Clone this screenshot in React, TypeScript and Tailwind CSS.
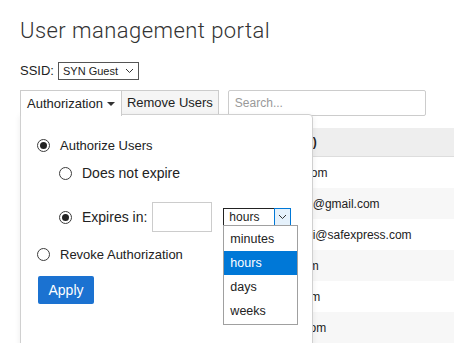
import { useState } from "react";

function Radio({ checked }: { checked?: boolean }) {
    return (
        <span className="w-[13px] h-[13px] rounded-full border border-[#3c3c3c] bg-white flex items-center justify-center shrink-0">
            {checked && <span className="w-[7px] h-[7px] rounded-full bg-[#222]" />}
        </span>
    );
}

function Chevron() {
    return (
        <svg width="9" height="6" viewBox="0 0 9 6" className="shrink-0">
            <polyline points="1,1 4.5,4.5 8,1" fill="none" stroke="#333" strokeWidth="1" />
        </svg>
    );
}

const users = [
    "ajdk@cisco.com",
    "sarah_lee123@gmail.com",
    "vamshir_reddi@safexpress.com",
    "liu@wipro.com",
    "alt@acme.com",
    "tpdr@cisco.com",
];

function App() {
    const [unit, setUnit] = useState("hours");
    const units = ["minutes", "hours", "days", "weeks"];

    return (
        <div className="w-full h-[343px] overflow-hidden bg-white pl-5 pt-[18px] font-['Liberation_Sans',Arial,sans-serif] text-[13px] text-[#222]">
            <h1 className="font-['Roboto',sans-serif] font-light text-[22px] leading-[26px] tracking-[0.45px] text-[#333]">
                User management portal
            </h1>

            <div className="mt-[18px] flex items-center h-[18px]">
                <span className="mr-[4px]">SSID:</span>
                <div className="h-[18px] w-[81px] border border-[#555] flex items-center justify-between pl-[4px] pr-[4px] text-[11px]">
                    <span>SYN Guest</span>
                    <Chevron />
                </div>
            </div>

            <div className="relative mt-[10px] flex items-start h-[25px]">
                <div className="relative z-20 h-[26px] border border-b-0 border-[#ccc] bg-white flex items-center pl-[6px] pr-[6px] gap-[4px]">
                    <span>Authorization</span>
                    <svg width="8" height="4" viewBox="0 0 8 4">
                        <polygon points="0,0 8,0 4,4" fill="#333" />
                    </svg>
                </div>
                <div className="h-[25px] border border-l-0 border-[#ccc] bg-[#f5f5f5] flex items-center px-[5px]">
                    Remove Users
                </div>
                <div className="ml-[9px] h-[26px] w-[198px] border border-[#ccc] rounded-[2px] flex items-center pl-[6px] text-[12px] text-[#999]">
                    Search...
                </div>

                <div className="absolute left-0 top-[24px] z-10 w-[293px] h-[240px] border border-[#d0d0d0] rounded-tr-[4px] bg-white shadow-[0_2px_6px_rgba(0,0,0,0.08)] pl-[16px] pt-[20px]">
                    <div className="h-[21px] flex items-center gap-[10px]">
                        <Radio checked />
                        <span>Authorize Users</span>
                    </div>
                    <div className="mt-[7px] ml-[22px] h-[21px] flex items-center gap-[10px] text-[14px]">
                        <Radio />
                        <span>Does not expire</span>
                    </div>
                    <div className="mt-[18px] ml-[22px] h-[30px] flex items-center text-[14px]">
                        <Radio checked />
                        <span className="ml-[10px]">Expires in:</span>
                        <div className="ml-[5px] w-[60px] h-[30px] border border-[#ccc]" />
                        <div className="relative ml-[11px]">
                            <div className="flex h-[18px] w-[68px] text-[12px]">
                                <div className="flex-1 border border-r-0 border-[#222] flex items-center pl-[5px]">{unit}</div>
                                <div className="w-[17px] border border-[#0078d7] bg-[#e5f1fb] flex items-center justify-center">
                                    <Chevron />
                                </div>
                            </div>
                            <div className="absolute left-0 top-[17px] w-[75px] border border-[#a0a0a0] bg-white text-[12.5px] py-px">
                                {units.map((u) => (
                                    <div
                                        key={u}
                                        onClick={() => setUnit(u)}
                                        className={`h-[24px] flex items-center pl-[6px] ${u === "hours" ? "bg-[#0078d7] text-white" : "text-[#222]"}`}
                                    >
                                        {u}
                                    </div>
                                ))}
                            </div>
                        </div>
                    </div>
                    <div className="mt-[12px] h-[21px] flex items-center gap-[10px]">
                        <Radio />
                        <span>Revoke Authorization</span>
                    </div>
                    <button className="mt-[11px] ml-px w-[56px] h-[28px] rounded-[2px] bg-[#1b72d1] text-white text-[14px]">
                        Apply
                    </button>
                </div>
            </div>

            <div className="mt-[13px] min-w-[640px] text-[12px]">
                <div className="flex h-[29px] items-center bg-[#eeeeee] border-b border-[#dddddd] font-bold">
                    <div className="w-[212px] px-2">
                        <span className="block w-[13px] h-[13px] border border-[#999] bg-white" />
                    </div>
                    <div className="px-2">Users (Email)</div>
                </div>
                {users.map((email, i) => (
                    <div key={email} className={`flex h-[31px] items-center ${i % 2 === 1 ? "bg-[#f7f7f7]" : "bg-white"}`}>
                        <div className="w-[212px] px-2">
                            <span className="block w-[13px] h-[13px] border border-[#999] bg-white" />
                        </div>
                        <div className="px-2 whitespace-nowrap">{email}</div>
                    </div>
                ))}
            </div>
        </div>
    );
}

export default App;
